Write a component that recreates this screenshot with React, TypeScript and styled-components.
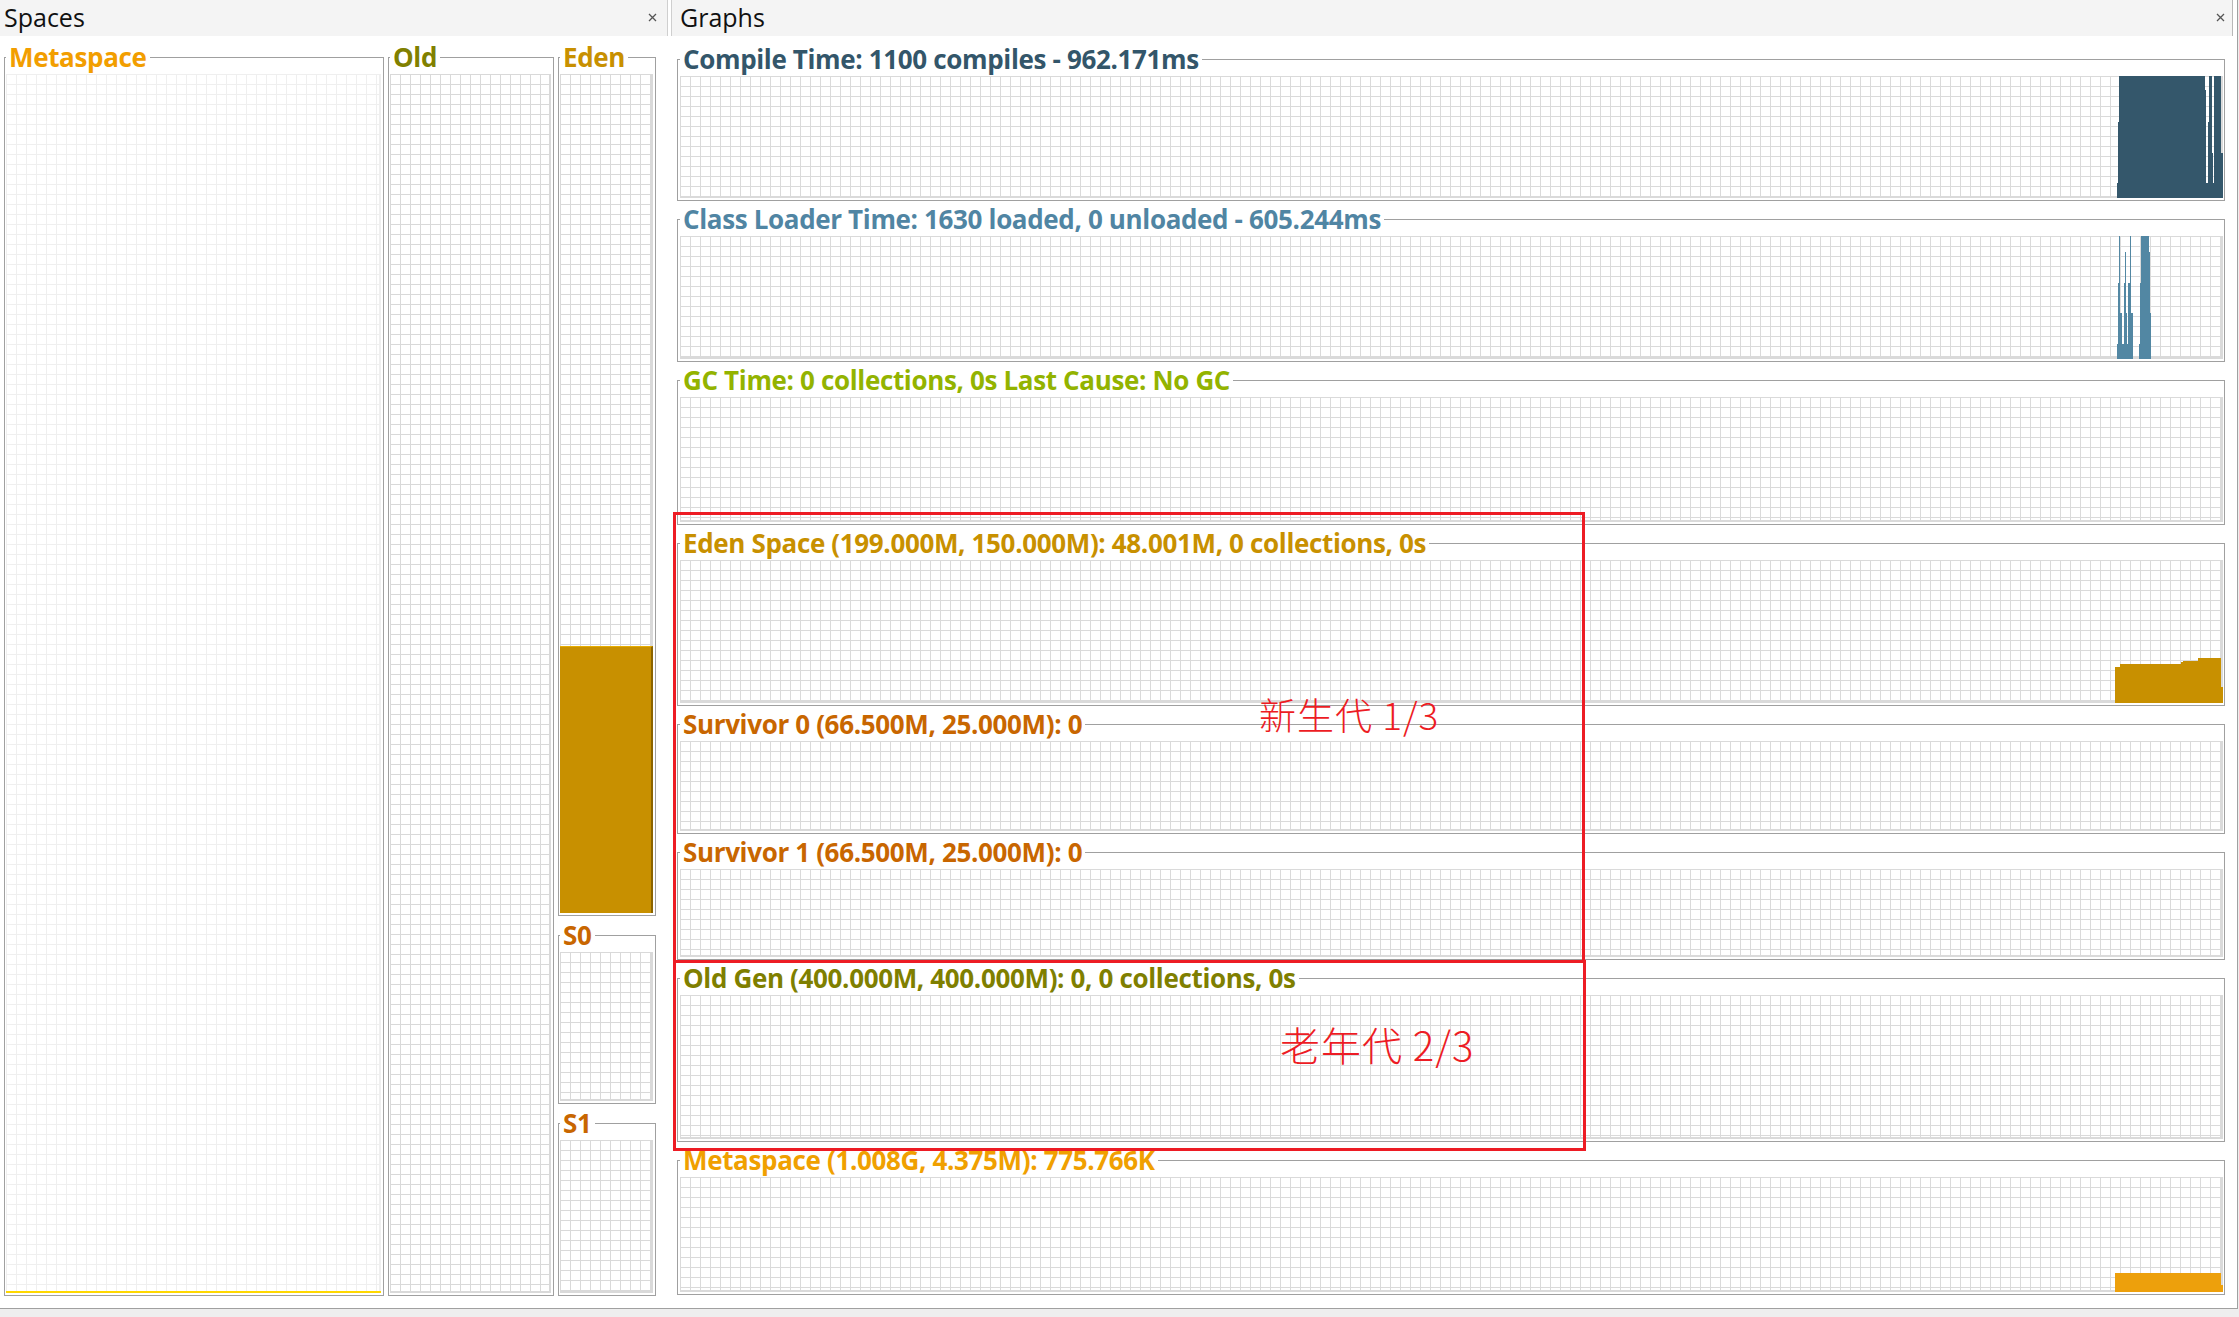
import React from "react";
import styled, { createGlobalStyle } from "styled-components";

const GlobalStyle = createGlobalStyle`
  html, body { margin: 0; padding: 0; background: #ffffff; }
  body { font-family: "Open Sans", "Noto Sans", "Liberation Sans", sans-serif; }
  *, *::before, *::after { box-sizing: border-box; }
`;

const Window = styled.div`
  position: relative;
  width: 2239px;
  height: 1317px;
  background: #eeeeee;
  overflow: hidden;
`;

const Main = styled.div`
  display: flex;
  width: 2238px;
  height: 1309px;
  background: #ffffff;
  border-right: 1px solid #a0a0a0;
  border-bottom: 1px solid #a0a0a0;
`;

const SpacesPanel = styled.section`
  width: 668px;
  flex: none;
  display: flex;
  flex-direction: column;
`;

const GraphsPanel = styled.section`
  flex: 1;
  min-width: 0;
  margin-left: 3px;
  display: flex;
  flex-direction: column;
`;

const PanelHeader = styled.header<{ $side: "left" | "right" }>`
  height: 36px;
  flex: none;
  display: flex;
  align-items: center;
  justify-content: space-between;
  background: #f4f4f4;
  padding: 0 ${(p) => (p.$side === "left" ? "10px" : "7px")} 3px
    ${(p) => (p.$side === "left" ? "4px" : "8px")};
  border-right: ${(p) => (p.$side === "left" ? "1px solid #cfcfcf" : "1px solid #b8b8b8")};
  border-left: ${(p) => (p.$side === "right" ? "1px solid #cfcfcf" : "none")};
  margin-right: ${(p) => (p.$side === "right" ? "4px" : "0")};
`;

const HeaderTitle = styled.span`
  font-size: 25px;
  font-weight: 400;
  color: #111111;
`;

const CloseSvg = styled.svg`
  width: 9px;
  height: 9px;
  flex: none;
  margin-top: 2px;
`;

const CloseIcon = () => (
  <CloseSvg viewBox="0 0 9 9">
    <path d="M1 1 L8 8 M8 1 L1 8" stroke="#555555" strokeWidth="1.3" fill="none" />
  </CloseSvg>
);

const SpacesBody = styled.div`
  flex: 1;
  min-height: 0;
  display: grid;
  grid-template-columns: 380px 166px 98px;
  column-gap: 4px;
  padding: 6px 0 12px 4px;
`;

const SpacesColumn = styled.div`
  display: flex;
  flex-direction: column;
  gap: 4px;
  min-height: 0;
`;

const SpaceBox = styled.fieldset<{ $outer?: number }>`
  margin: 0;
  padding: 2px 2px 2px 1px;
  border: 1px solid #a0a0a0;
  min-width: 0;
  min-height: 0;
  display: flex;
  flex-direction: column;
  ${(p) => (p.$outer ? `flex: none; height: ${p.$outer}px;` : "flex: 1;")}
`;

const GraphBox = styled.fieldset`
  margin: 0;
  padding: 2px 1px 2px 2px;
  border: 1px solid #a0a0a0;
  min-width: 0;
  flex: none;
`;

const Legend = styled.legend<{ $color: string }>`
  margin-left: 0;
  padding: 0 3px 0 3px;
  height: 30px;
  line-height: 30px;
  font-size: 26px;
  font-weight: 700;
  letter-spacing: -0.35px;
  color: ${(p) => p.$color};
  white-space: nowrap;
`;

const gridBg = (c: string) => `
  background-color: #ffffff;
  background-image: linear-gradient(to right, ${c} 1px, transparent 1px),
    linear-gradient(to bottom, ${c} 1px, transparent 1px);
  background-size: 10px 10px;
  box-shadow: inset -2px -2px 0 ${c};
`;

const SpacePlot = styled.div<{ $grid: string }>`
  flex: 1;
  min-height: 0;
  display: flex;
  flex-direction: column;
  justify-content: flex-end;
  ${(p) => gridBg(p.$grid)}
`;

const Fill = styled.div<{ $color: string; $light?: string; $dark?: string }>`
  flex: none;
  min-height: 2px;
  background: ${(p) => p.$color};
  border-top: ${(p) => (p.$light ? `1px solid ${p.$light}` : "none")};
  border-right: ${(p) => (p.$dark ? `2px solid ${p.$dark}` : "none")};
`;

const GraphsBody = styled.div`
  flex: 1;
  min-height: 0;
  display: flex;
  flex-direction: column;
  gap: 3px;
  padding: 8px 12px 0 6px;
`;

const GraphPlot = styled.div<{ $h: number }>`
  height: ${(p) => p.$h}px;
  display: flex;
  justify-content: flex-end;
  align-items: stretch;
  ${gridBg("#dadada")}
`;

const ChartSvg = styled.svg`
  width: 108px;
  height: 100%;
  flex: none;
  display: block;
`;

type Step = [number, number, number];

const chartPath = (steps: Step[]) => {
  let d = `M${steps[0][0]} 100`;
  for (const [x0, x1, f] of steps) {
    const y = (100 - f * 100).toFixed(2);
    d += ` L${x0} ${y} L${x1} ${y}`;
  }
  d += ` L${steps[steps.length - 1][1]} 100 Z`;
  return d;
};

const Chart = ({ steps, color }: { steps: Step[]; color: string }) => (
  <ChartSvg viewBox="0 0 108 100" preserveAspectRatio="none" shapeRendering="crispEdges">
    <path d={chartPath(steps)} fill={color} />
  </ChartSvg>
);

const compileSteps: Step[] = [
  [2, 3, 0.12], [3, 4, 0.62], [4, 90, 1], [90, 91.3, 0.885], [91.3, 92.7, 0.12],
  [92.7, 94, 0.62], [94, 96.7, 1], [96.7, 98, 0.37], [98, 99.3, 0.12], [99.3, 106, 1], [106, 108, 0.37],
];

const classSteps: Step[] = [
  [2, 3.33, 0.12], [3.33, 4, 0.62], [4, 5.33, 1], [5.33, 7.33, 0.37], [7.33, 8.67, 0.12],
  [8.67, 10, 0.62], [10, 10.67, 0.87], [10.67, 12, 0.37], [12, 13.33, 0.12], [13.33, 14.67, 0.62],
  [14.67, 16, 1], [16, 18, 0.37], [18, 24, 0], [24, 25.33, 0.12], [25.33, 26, 0.62],
  [26, 34, 1], [34, 34.67, 0.87], [34.67, 36, 0.37],
];

const edenSteps: Step[] = [
  [0, 5, 0.25], [5, 66, 0.271], [66, 67.7, 0.286], [67.7, 83, 0.293], [83, 106, 0.314], [106, 108, 0.114],
];

const metaSteps: Step[] = [[0, 106, 0.165], [106, 108, 0.06]];

type Graph = { title: string; color: string; h: number; chart?: { steps: Step[]; color: string } };

const graphs: Graph[] = [
  { title: "Compile Time: 1100 compiles - 962.171ms", color: "#33566a", h: 122, chart: { steps: compileSteps, color: "#34576b" } },
  { title: "Class Loader Time: 1630 loaded, 0 unloaded - 605.244ms", color: "#5085a3", h: 123, chart: { steps: classSteps, color: "#5287a3" } },
  { title: "GC Time: 0 collections, 0s Last Cause: No GC", color: "#93b300", h: 125 },
  { title: "Eden Space (199.000M, 150.000M): 48.001M, 0 collections, 0s", color: "#c89000", h: 143, chart: { steps: edenSteps, color: "#c89000" } },
  { title: "Survivor 0 (66.500M, 25.000M): 0", color: "#c86600", h: 90 },
  { title: "Survivor 1 (66.500M, 25.000M): 0", color: "#c86600", h: 88 },
  { title: "Old Gen (400.000M, 400.000M): 0, 0 collections, 0s", color: "#7f7f00", h: 144 },
  { title: "Metaspace (1.008G, 4.375M): 775.766K", color: "#f0a000", h: 115, chart: { steps: metaSteps, color: "#eda00c" } },
];

const RedBox = styled.div<{ $x: number; $y: number; $w: number; $h: number }>`
  position: absolute;
  left: ${(p) => p.$x}px;
  top: ${(p) => p.$y}px;
  width: ${(p) => p.$w}px;
  height: ${(p) => p.$h}px;
  border: 3px solid #ed1c24;
  pointer-events: none;
`;

const Note = styled.div<{ $x: number; $y: number; $size: number }>`
  position: absolute;
  left: ${(p) => p.$x}px;
  top: ${(p) => p.$y}px;
  font-family: "Noto Sans CJK SC", "Noto Sans", sans-serif;
  font-weight: 300;
  font-size: ${(p) => p.$size}px;
  letter-spacing: 1px;
  line-height: 1;
  color: #ed1c24;
  white-space: nowrap;
  pointer-events: none;
`;

export default function App() {
  return (
    <>
      <GlobalStyle />
      <Window>
        <Main>
          <SpacesPanel>
            <PanelHeader $side="left">
              <HeaderTitle>Spaces</HeaderTitle>
              <CloseIcon />
            </PanelHeader>
            <SpacesBody>
              <SpaceBox>
                <Legend $color="#f29e00">Metaspace</Legend>
                <SpacePlot $grid="#efefef">
                  <Fill $color="#ffd800" style={{ height: "0.2%" }} />
                </SpacePlot>
              </SpaceBox>
              <SpaceBox>
                <Legend $color="#808000">Old</Legend>
                <SpacePlot $grid="#d9d9d9" />
              </SpaceBox>
              <SpacesColumn>
                <SpaceBox>
                  <Legend $color="#c89000">Eden</Legend>
                  <SpacePlot $grid="#d9d9d9">
                    <Fill $color="#c89000" $light="#e8ad00" $dark="#8c6400" style={{ height: "31.8%" }} />
                  </SpacePlot>
                </SpaceBox>
                <SpaceBox $outer={184}>
                  <Legend $color="#c86600">S0</Legend>
                  <SpacePlot $grid="#d9d9d9" />
                </SpaceBox>
                <SpaceBox $outer={188}>
                  <Legend $color="#c86600">S1</Legend>
                  <SpacePlot $grid="#d9d9d9" />
                </SpaceBox>
              </SpacesColumn>
            </SpacesBody>
          </SpacesPanel>
          <GraphsPanel>
            <PanelHeader $side="right">
              <HeaderTitle>Graphs</HeaderTitle>
              <CloseIcon />
            </PanelHeader>
            <GraphsBody>
              {graphs.map((g) => (
                <GraphBox key={g.title}>
                  <Legend $color={g.color}>{g.title}</Legend>
                  <GraphPlot $h={g.h}>
                    {g.chart && <Chart steps={g.chart.steps} color={g.chart.color} />}
                  </GraphPlot>
                </GraphBox>
              ))}
            </GraphsBody>
          </GraphsPanel>
        </Main>
        <RedBox $x={673} $y={512} $w={912} $h={451} />
        <RedBox $x={673} $y={960} $w={913} $h={191} />
        <Note $x={1259} $y={696} $size={37}>新生代 1/3</Note>
        <Note $x={1280} $y={1024} $size={40}>老年代 2/3</Note>
      </Window>
    </>
  );
}
